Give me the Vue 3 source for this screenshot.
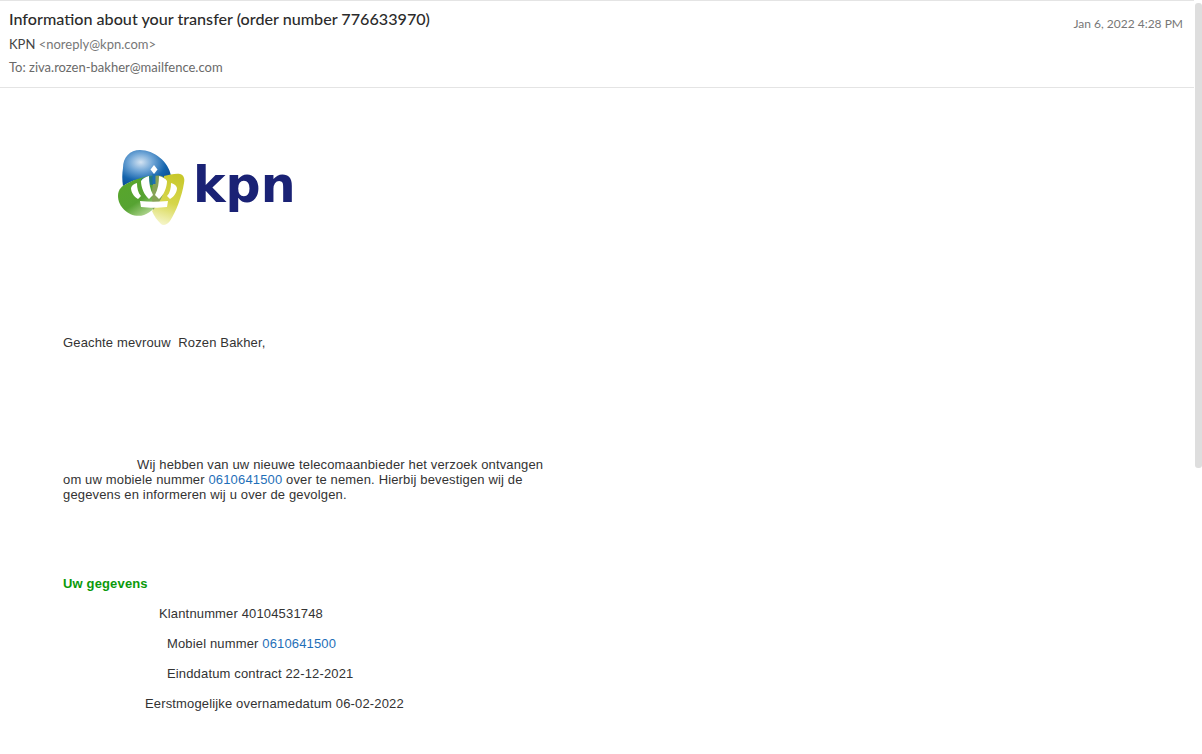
<script setup>
const rows = [
  { label: 'Klantnummer 40104531748', indent: 96 },
  { label: 'Mobiel nummer ', link: '0610641500', indent: 104 },
  { label: 'Einddatum contract 22-12-2021', indent: 104 },
  { label: 'Eerstmogelijke overnamedatum 06-02-2022', indent: 82 }
]
</script>

<template>
  <div class="mail">
    <header class="mail-header">
      <div class="meta">
        <h1 class="subject">Information about your transfer (order number 776633970)</h1>
        <div class="from">KPN <span class="address">&lt;noreply@kpn.com&gt;</span></div>
        <div class="to">To: ziva.rozen-bakher@mailfence.com</div>
      </div>
      <div class="date">Jan 6, 2022 4:28 PM</div>
    </header>

    <main class="mail-body">
      <div class="logo">
        <svg class="logo-mark" width="68" height="76" viewBox="0 0 68 76">
          <defs>
            <radialGradient id="blue" cx="0.38" cy="0.34" r="0.72">
              <stop offset="0" stop-color="#d3e3f2" />
              <stop offset="0.35" stop-color="#6fa5d6" />
              <stop offset="0.72" stop-color="#1464ad" />
              <stop offset="1" stop-color="#0b4f96" />
            </radialGradient>
            <linearGradient id="green" x1="0.1" y1="0.1" x2="0.8" y2="1">
              <stop offset="0" stop-color="#58a62a" />
              <stop offset="0.55" stop-color="#56a332" />
              <stop offset="1" stop-color="#cfe6b0" />
            </linearGradient>
            <linearGradient id="yellow" x1="0.6" y1="0" x2="0.4" y2="1">
              <stop offset="0" stop-color="#c8c82c" />
              <stop offset="0.55" stop-color="#d6d64a" />
              <stop offset="1" stop-color="#f5f5c8" />
            </linearGradient>
          </defs>
          <path d="M6 18C6 7 13 0 23 0c14 0 29 12 31 26 0 3-3 4-6 3-14-2-30-1-42 7-1-6-1-12 0-18Z" fill="url(#blue)" />
          <path d="M47 26c5-1 12-3 16-2 4 1 5 5 4 9-2 13-8 29-14 38-3 4-7 5-9 3-4-4-7-8-9-13 8-8 13-21 12-35Z" fill="url(#yellow)" />
          <path d="M1 46c0-7 4-10 10-13 8-4 15-6 21-7 7-1 14 0 16 3 1 12-6 30-21 36C14 69 1 58 1 46Z" fill="url(#green)" />
          <path d="M37 26c4-1 9-1 11 3 1 11-4 23-12 31-2-11-1-23 1-34Z" fill="#87a257" />
          <path d="M24 29c4-2 9-3 13-3-1 3-1 6-1 9l-10-1Z" fill="#1f7784" />
          <path d="M37 15l3.500 4.500-3.500 4.500-3.500-4.500Z" fill="#fff" />
          <path d="M35.500 24h3v10h-3Z" fill="#1c6fb5" />
          <path d="M24 31c2-3 5-4 8-5 0 7 1 13 4 19l-4 4c-5-4-8-12-8-18Z" fill="#fff" />
          <path d="M50 31c-2-3-5-4-8-5 0 7-1 13-4 19l4 4c5-4 8-12 8-18Z" fill="#fff" />
          <path d="M14 38c1-3 3-4 6-5 0 5 1 10 4 13l-3 3c-4-2-7-7-7-11Z" fill="#fff" />
          <path d="M60 38c-1-3-3-4-6-5 0 5-1 10-4 13l3 3c4-2 7-7 7-11Z" fill="#fff" />
          <path d="M23 51c9 1 18 1 28 0l-1 6c-8 1-18 1-26 0Z" fill="#fff" />
        </svg>
        <span class="logo-word">kpn</span>
      </div>

      <p class="greeting">Geachte mevrouw&nbsp; Rozen Bakher,</p>

      <p class="intro">
        Wij hebben van uw nieuwe telecomaanbieder het verzoek ontvangen om uw mobiele nummer
        <a class="phone">0610641500</a> over te nemen. Hierbij bevestigen wij de gegevens en
        informeren wij u over de gevolgen.
      </p>

      <h2 class="section">Uw gegevens</h2>

      <div class="details">
        <div v-for="row in rows" :key="row.label" class="row" :style="{ paddingLeft: row.indent + 'px' }">
          {{ row.label }}<a v-if="row.link" class="phone">{{ row.link }}</a>
        </div>
      </div>
    </main>

    <div class="scrollbar"></div>
  </div>
</template>

<style scoped>
.mail {
  position: relative;
  height: 754px;
  overflow: hidden;
  background: #fff;
  font-family: "Liberation Sans", Arial, sans-serif;
}

.mail-header {
  display: flex;
  justify-content: space-between;
  height: 86px;
  margin-right: 8px;
  padding: 0 11px 0 9px;
  border-top: 1px solid #e4e4e4;
  border-bottom: 1px solid #e4e4e4;
  font-family: Lato, sans-serif;
}

.subject {
  margin: 8px 0 0;
  font-size: 16.15px;
  line-height: 20px;
  font-weight: 500;
  color: #2b2b2b;
}

.from {
  margin-top: 5px;
  font-size: 13px;
  line-height: 20px;
  color: #444;
}

.address {
  color: #777;
}

.to {
  margin-top: 3px;
  font-size: 13px;
  line-height: 20px;
  color: #6a6a6a;
}

.date {
  margin-top: 14px;
  font-size: 12px;
  line-height: 18px;
  color: #777;
}

.mail-body {
  padding: 62px 0 0 63px;
  font-size: 13px;
  line-height: 15px;
  color: #333;
  letter-spacing: 0.15px;
}

.logo {
  display: flex;
  align-items: center;
  gap: 8px;
  height: 76px;
  margin-left: 54px;
}

.logo-word {
  padding-bottom: 4px;
  font-family: "DejaVu Sans", sans-serif;
  font-size: 49px;
  font-weight: 700;
  line-height: 60px;
  letter-spacing: 0;
  color: #1a2275;
}

.greeting {
  margin: 109px 0 0;
}

.intro {
  width: 490px;
  margin: 107px 0 0;
  text-indent: 74px;
}

.phone {
  color: #1f6fb8;
}

.section {
  margin: 74px 0 0;
  font-size: 13px;
  line-height: 15px;
  font-weight: 700;
  color: #0a9a0a;
}

.details {
  display: flex;
  flex-direction: column;
  gap: 15px;
  margin-top: 15px;
}

.scrollbar {
  position: absolute;
  top: 3px;
  right: 0;
  width: 7px;
  height: 465px;
  border-radius: 3px;
  background: #dedede;
}
</style>
